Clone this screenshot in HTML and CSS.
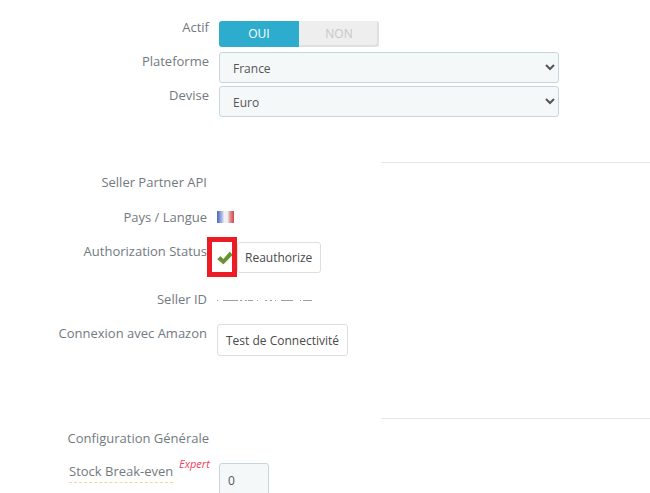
FILE: index.html
```html
<!DOCTYPE html>
<html lang="fr">
<head>
<meta charset="utf-8">
<title>Configuration Amazon</title>
<link rel="stylesheet" href="styles.css">
</head>
<body>
<form class="page">
  <section class="group group-market">
    <div class="row row-active">
      <label class="label label-wide">Actif</label>
      <div class="switch">
        <span class="switch-on">OUI</span>
        <span class="switch-off">NON</span>
      </div>
    </div>
    <div class="row row-select">
      <label class="label label-wide">Plateforme</label>
      <select class="select"><option>France</option></select>
    </div>
    <div class="row row-select row-devise">
      <label class="label label-wide">Devise</label>
      <select class="select"><option>Euro</option></select>
    </div>
  </section>
  <hr class="rule rule-first">
  <section class="group">
    <div class="row row-api"><label class="label">Seller Partner API</label></div>
    <div class="row row-country">
      <label class="label">Pays / Langue</label>
      <svg class="flag" width="17" height="12" viewBox="0 0 17 12" aria-label="France">
        <defs>
          <linearGradient id="flag-colors" x1="0" y1="0" x2="1" y2="0">
            <stop offset="0" stop-color="#4a66b8"/>
            <stop offset=".3" stop-color="#aebde6"/>
            <stop offset=".42" stop-color="#f1f1f4"/>
            <stop offset=".62" stop-color="#f3eeee"/>
            <stop offset=".75" stop-color="#e49a9c"/>
            <stop offset="1" stop-color="#c9484e"/>
          </linearGradient>
        </defs>
        <rect width="17" height="12" fill="url(#flag-colors)"/>
      </svg>
    </div>
    <div class="row row-status">
      <label class="label">Authorization Status</label>
      <div class="status">
        <svg class="check" width="16" height="14" viewBox="0 0 16 14" aria-label="OK">
          <path d="M.6 7.800 3 5.400a.6.6 0 0 1 .8 0l2.600 2.700L12.300 1a.6.6 0 0 1 .8 0l2.300 2.400a.6.600 0 0 1 0 .8L6.800 13a.6.6 0 0 1-.8 0L.6 8.600a.6.600 0 0 1 0-.8z" fill="#6a9235"/>
        </svg>
        <button type="button" class="button button-reauth">Reauthorize</button>
        <span class="highlight"></span>
      </div>
    </div>
    <div class="row row-seller">
      <label class="label">Seller ID</label>
      <svg class="redacted" width="98" height="3" viewBox="0 0 98 3" aria-hidden="true">
        <path d="M0 1.500h1M6 1.500h15M23 1.500h2M28 1.500h2M31 1.500h5M40 1.500h1M48 1.500h2M53 1.500h2M58 1.500h1M64 1.500h12M83 1.500h1M86 1.500h9" stroke="#77777b" stroke-width="1" opacity=".7"/>
      </svg>
    </div>
    <div class="row row-connect">
      <label class="label">Connexion avec Amazon</label>
      <button type="button" class="button button-test">Test de Connectivité</button>
    </div>
  </section>
  <hr class="rule rule-second">
  <section class="group">
    <div class="row row-config"><label class="label label-config">Configuration Générale</label></div>
    <div class="row row-stock">
      <div class="stock-label">
        <label class="stock-name">Stock Break-even</label>
        <span class="expert">Expert</span>
      </div>
      <input class="number" type="text" value="0">
    </div>
  </section>
</form>
</body>
</html>
```
FILE: styles.css
```css
html, body {
  margin: 0;
  padding: 0;
  height: 493px;
  overflow: hidden;
  background: #fff;
}
body {
  font-family: "Open Sans", sans-serif;
  font-size: 12px;
  color: #666;
}
.page {
  display: block;
  height: 493px;
  overflow: hidden;
}
.group {
  display: flex;
  flex-direction: column;
}
.group-market {
  padding-top: 21px;
}
.row {
  display: flex;
  align-items: flex-start;
}
.label {
  width: 207px;
  flex: none;
  text-align: right;
  line-height: 18px;
  color: #727a80;
  font-size: 13px;
}
.label-wide {
  width: 209px;
  margin-right: 10px;
}
.label-config {
  width: 209px;
}
.row-active {
  height: 31px;
}
.row-active .label {
  margin-top: -3px;
}
.switch {
  display: flex;
  width: 160px;
  height: 26px;
  font-size: 12px;
  line-height: 26px;
  text-align: center;
}
.switch-on {
  flex: 1;
  background: #2eacce;
  color: #fff;
  border-radius: 3px 0 0 3px;
}
.switch-off {
  flex: 1;
  background: #eee;
  color: #c7c7c7;
  border-radius: 0 3px 3px 0;
  box-shadow: inset -2px -2px 0 #e0e0e0;
}
.row-select {
  height: 34px;
}
.select {
  width: 340px;
  height: 31px;
  box-sizing: border-box;
  padding: 2px 9px 0;
  border: 1px solid #c7d6db;
  border-radius: 3px;
  background-color: #f5f8f9;
  color: #555;
  font-family: inherit;
  font-size: 12px;
}
.rule {
  margin: 0 0 0 381px;
  border: 0;
  border-top: 1px solid #e6e6e6;
  height: 0;
}
.rule-first {
  margin-top: 42px;
}
.rule-second {
  margin-top: 62px;
}
.row-api {
  margin-top: 10px;
}
.row-country {
  margin-top: 17px;
  gap: 10px;
  height: 18px;
  align-items: center;
}
.flag {
  display: block;
}
.row-status {
  margin-top: 16px;
}
.status {
  position: relative;
  display: flex;
  align-items: center;
  height: 31px;
}
.check {
  margin: 0 4px 0 10px;
}
.button {
  box-sizing: border-box;
  border: 1px solid #dedede;
  border-radius: 3px;
  background: #fff;
  color: #4a4a4a;
  font-family: inherit;
  font-size: 12px;
  padding: 0 8px;
}
.button-reauth {
  width: 84px;
  height: 31px;
  padding: 0 9px 0 7px;
}
.highlight {
  position: absolute;
  left: 0;
  top: -5px;
  width: 30px;
  height: 40px;
  box-sizing: border-box;
  border: 5px solid #ed1c24;
  pointer-events: none;
}
.row-seller {
  margin-top: 17px;
  gap: 10px;
  height: 18px;
}
.redacted {
  margin-top: 9px;
  display: block;
}
.row-connect {
  margin-top: 16px;
  gap: 10px;
}
.button-test {
  width: 131px;
  height: 32px;
}
.row-config {
  margin-top: 10px;
}
.row-stock {
  margin-top: 15px;
}
.stock-label {
  position: relative;
  flex: none;
  width: 219px;
  padding-left: 69px;
  box-sizing: border-box;
}
.stock-name {
  display: inline-block;
  line-height: 18px;
  font-size: 13px;
  color: #727a80;
  padding-bottom: 2px;
  border-bottom: 1px dashed #f0d89a;
}
.expert {
  position: absolute;
  left: 179px;
  top: -6px;
  font-size: 11px;
  font-style: italic;
  color: #f5405a;
}
.number {
  width: 50px;
  height: 34px;
  margin-top: 1px;
  box-sizing: border-box;
  padding: 0 8px;
  border: 1px solid #c7d6db;
  border-radius: 3px;
  background: #f5f8f9;
  color: #555;
  font-family: inherit;
  font-size: 12px;
}
```
